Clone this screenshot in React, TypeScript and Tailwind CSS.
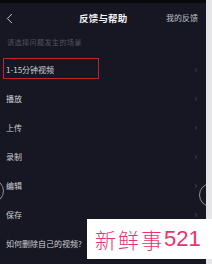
import { ChevronLeft, ChevronRight } from 'lucide-react';

const rows = ['1-15分钟视频', '播放', '上传', '录制', '编辑', '保存', '如何删除自己的视频?'];

const cjk = { fontFamily: '"Noto Sans CJK SC", "Noto Sans", sans-serif' };

export default function App() {
  return (
    <div className="relative flex w-[212px] h-[264px] overflow-hidden bg-[#e6e6e9]" style={cjk}>
      <div className="relative flex flex-col w-[206px] h-full overflow-hidden bg-[#161722]">
        <div className="h-[3px] bg-[#09090c]" />

        {/* header */}
        <div className="relative flex items-center h-[30px]">
          <ChevronLeft className="absolute left-[1px] w-[17px] h-[17px] text-[#c6c7cd]" strokeWidth={1.4} />
          <span className="absolute left-[79px] text-[9.5px] leading-[12px] font-bold text-[#f2f2f4] tracking-[0.2px]">
            反馈与帮助
          </span>
          <span className="absolute left-[166px] text-[8px] leading-[10px] text-[#bfc0c5]">我的反馈</span>
        </div>

        <div className="h-[22px] pt-[4px] pl-[7px]">
          <span className="block text-[7px] leading-[10px] text-[#51535e] tracking-[0.5px]">请选择问题发生的场景</span>
        </div>

        {rows.map((label, i) => (
          <div key={label} className="relative flex items-center h-[29px] pl-[6px] pr-[7px]">
            {i === 0 && (
              <div className="absolute left-[3px] top-[3px] w-[96px] h-[21px] border border-[#c2242c]" />
            )}
            <span className="flex-1 text-[8px] leading-[10px] text-[#cfd0d5]">{label}</span>
            {i < rows.length - 1 && (
              <ChevronRight className="w-[6px] h-[6px] text-[#5d5f69]" strokeWidth={2.5} />
            )}
          </div>
        ))}

        {/* gesture edge rings */}
        <div className="absolute left-[-20px] top-[179px] w-[24px] h-[24px] rounded-full border border-[#8e8f97]" />
        <div className="absolute left-[199px] top-[183px] w-[24px] h-[24px] rounded-full border border-[#8e8f97]" />
      </div>

      {/* watermark */}
      <div className="absolute left-[87px] top-[219px] w-[125px] h-[40px] bg-white flex items-center pl-[8px]">
        <span
          className="text-[21px] leading-[24px] font-light text-[#e8336e] tracking-[2px]"
          style={{ fontFamily: '"Noto Sans CJK SC", serif' }}
        >
          新鲜事
        </span>
        <span
          className="text-[22px] leading-[24px] text-[#e8336e]"
          style={{ fontFamily: '"Liberation Sans", Arial, sans-serif' }}
        >
          521
        </span>
      </div>
    </div>
  );
}
